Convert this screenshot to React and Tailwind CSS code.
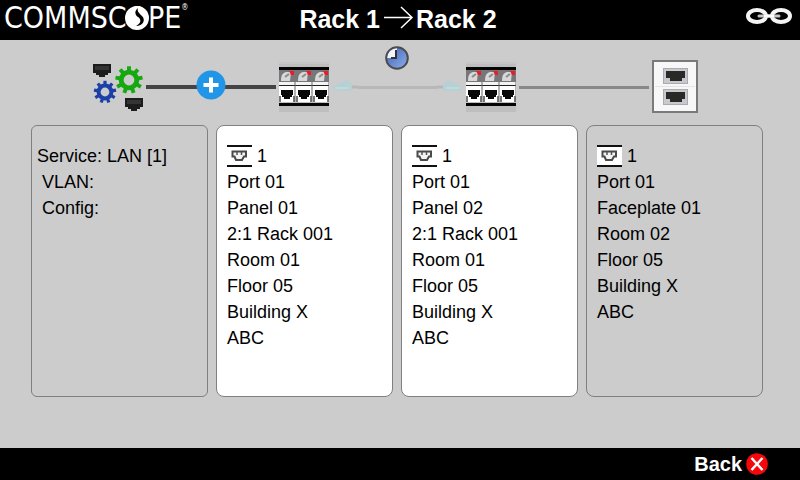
const cards = [
  {
    id: "source-port",
    active: true,
    port: "1",
    lines: ["Port 01", "Panel 01", "2:1 Rack 001", "Room 01", "Floor 05", "Building X", "ABC"],
  },
  {
    id: "target-port",
    active: true,
    port: "1",
    lines: ["Port 01", "Panel 02", "2:1 Rack 001", "Room 01", "Floor 05", "Building X", "ABC"],
  },
  {
    id: "faceplate-port",
    active: false,
    port: "1",
    lines: ["Port 01", "Faceplate 01", "Room 02", "Floor 05", "Building X", "ABC"],
  },
];

const gearTeeth = [0, 40, 80, 120, 160, 200, 240, 280, 320];

const Gear = ({ cx, cy, r, color }) => (
  <g transform={`translate(${cx} ${cy})`}>
    {gearTeeth.map((angle) => (
      <rect key={angle} x={-r * 0.2} y={-r * 1.4} width={r * 0.4} height={r * 0.6} fill={color} transform={`rotate(${angle})`} />
    ))}
    <circle r={r * 0.8} fill="none" stroke={color} strokeWidth={r * 0.5} />
  </g>
);

const Plug = ({ x, y }) => (
  <g transform={`translate(${x} ${y})`}>
    <path d="M0 0h18v9h-3v2h-3v2H6v-2H3V9H0z" fill="#1c1c1c" />
    <path d="M2 2h14v4H2z" fill="#343434" />
  </g>
);

const ServiceIcon = () => (
  <svg width="52" height="50" viewBox="0 0 52 50" className="shrink-0" role="img" aria-label="Service">
    <Plug x={2} y={2} />
    <Plug x={34} y={36} />
    <Gear cx={38} cy={18} r={9.8} color="#16a80f" />
    <Gear cx={14} cy={30} r={8} color="#1c3fa8" />
  </svg>
);

const PanelIcon = () => (
  <svg width="50" height="50" viewBox="0 0 50 50" className="shrink-0" role="img" aria-label="Patch panel">
    <rect width="50" height="50" fill="#bebebe" />
    <rect width="50" height="2" fill="#c6c6c6" />
    <rect y="5" width="50" height="3" fill="#050505" />
    <rect y="8" width="50" height="12" fill="#77777b" />
    <rect y="20" width="50" height="3" fill="#f4f4f4" />
    <rect y="23" width="50" height="1" fill="#222" />
    <rect y="24" width="50" height="16" fill="#fff" />
    <rect y="41" width="50" height="3" fill="#050505" />
    {[0, 17, 34].map((x) => (
      <g key={x} transform={`translate(${x} 0)`}>
        <path d="M2 19c0-5 1-8 5-9h5l-1 9z" fill="#d8d8d8" />
        <path d="M6 15l4-3" stroke="#8c8c8c" strokeWidth="2" />
        <path d="M10 9h5v4h-3z" fill="#ed1c24" />
        <path d="M2 28h12v5h-1v2h-2v2H5v-2H3v-2H2z" fill="#080808" />
        <path d="M0 34h2v6H0zM14 34h2v6h-2z" fill="#777" />
        <path d="M16 20v20" stroke="#666" />
      </g>
    ))}
  </svg>
);

const FaceplateIcon = () => (
  <svg width="46" height="54" viewBox="0 0 46 54" className="shrink-0" role="img" aria-label="Faceplate">
    <rect x="1" y="1" width="44" height="51" fill="#f7f7f7" stroke="#7a7a7a" strokeWidth="2" />
    <path d="M3 26.500h40" stroke="#e4e4e4" />
    {[8, 29].map((y) => (
      <g key={y} transform={`translate(11 ${y})`}>
        <rect x="0.5" y="0.5" width="24" height="15" fill="#c9c9cd" stroke="#aaaab0" />
        <path d="M3 3h19v7h-3v3H7v-3H3z" fill="#292a28" />
      </g>
    ))}
  </svg>
);

const ClockIcon = () => (
  <svg width="24" height="24" viewBox="0 0 24 24" role="img" aria-label="Scheduled">
    <defs>
      <linearGradient id="clockFace" x1="0" y1="0" x2="1" y2="1">
        <stop offset="0.2" stopColor="#4d70c0" />
        <stop offset="1" stopColor="#8fb0ea" />
      </linearGradient>
    </defs>
    <circle cx="12" cy="12" r="10.8" fill="url(#clockFace)" stroke="#4c4c50" strokeWidth="2" />
    <path d="M12 12V2.200A9.800 9.800 0 0 0 2.200 12z" fill="#f3f5fa" />
    <path d="M11 4v8H6" fill="none" stroke="#333" strokeWidth="2" />
  </svg>
);

const PortIcon = () => (
  <svg width="25" height="22" viewBox="0 0 25 22" className="shrink-0" aria-hidden="true">
    <rect width="25" height="22" fill="#fff" />
    <path d="M0 1h25M0 21h25" stroke="#111" strokeWidth="2" />
    <path d="M5.500 6.500h13.500v5h-2l-2 3.500H9L7.500 11.500h-2z" fill="#f4f4f4" stroke="#4a4a4a" strokeWidth="2" />
    <path d="M10 7v3M14.500 7v3" stroke="#555" strokeWidth="1.500" />
  </svg>
);

const LinkIcon = () => (
  <svg width="46" height="18" viewBox="0 0 46 18" fill="none" aria-hidden="true">
    <ellipse cx="11" cy="9" rx="9" ry="6" stroke="#f4f4f4" strokeWidth="4" />
    <ellipse cx="35" cy="9" rx="9" ry="6" stroke="#f4f4f4" strokeWidth="4" />
    <path d="M13 9h20" stroke="#c4c4c4" strokeWidth="3" strokeLinecap="round" />
    <path d="M18 9h10" stroke="#fff" strokeWidth="3" />
  </svg>
);

const PendingLink = () => (
  <div className="relative flex flex-1 items-center">
    <svg width="26" height="14" viewBox="0 0 26 14" className="shrink-0" aria-hidden="true">
      <path d="M0 7L15 0l6 6-2 5H3z" fill="#b6d0d3" />
      <path d="M3 8h14" stroke="#bfdadd" strokeWidth="2" />
      <path d="M20 7h6" stroke="#b8b8b8" strokeWidth="3" />
    </svg>
    <div className="h-[3px] flex-1 bg-[#b8b8b8]" />
    <svg width="26" height="14" viewBox="0 0 26 14" className="shrink-0" aria-hidden="true">
      <path d="M26 7L11 0 5 6l2 5h16z" fill="#b6d0d3" />
      <path d="M9 8h14" stroke="#bfdadd" strokeWidth="2" />
      <path d="M0 7h6" stroke="#b8b8b8" strokeWidth="3" />
    </svg>
    <div className="absolute bottom-6 left-1/2 -translate-x-1/2">
      <ClockIcon />
    </div>
  </div>
);

const Logo = () => (
  <div className="flex items-start self-start font-['DejaVu_Sans_Condensed',sans-serif] text-[30px] leading-9">
    COMMSC
    <span className="relative">
      O
      <svg viewBox="0 0 24 24" className="absolute top-1.5 left-1/2 size-6 -translate-x-1/2" aria-hidden="true">
        <circle cx="12" cy="12" r="12" fill="#fff" />
        <path d="M13 2c-4 3-3 7 0 9s4 6-2 9c7 0 10-6 6-10s-5-5-4-8z" fill="#000" />
      </svg>
    </span>
    PE
    <span className="text-[8px] leading-4">®</span>
  </div>
);

const Header = () => (
  <header className="grid h-10 grid-cols-[1fr_auto_1fr] items-center bg-black pr-2 pl-1 text-white">
    <Logo />
    <h1 className="flex items-center text-[25px] font-bold">
      Rack 1
      <svg width="36" height="24" viewBox="0 0 36 24" fill="none" className="-mt-1" role="img" aria-label="to">
        <path d="M4 11.500h28M21 1l11 10.500L21 22" stroke="#fff" strokeWidth="1.500" />
      </svg>
      Rack 2
    </h1>
    <button type="button" aria-label="Connections" className="-mt-2 justify-self-end">
      <LinkIcon />
    </button>
  </header>
);

const Topology = () => (
  <div className="flex items-center gap-[3px] pt-5 pr-[102px] pl-[91px]">
    <ServiceIcon />
    <div className="relative flex flex-1 items-center justify-center">
      <div className="h-1 w-full bg-[#444]" />
      <button type="button" aria-label="Add connection" className="absolute size-[30px]">
        <svg viewBox="0 0 30 30" className="-mt-1" aria-hidden="true">
          <circle cx="15" cy="15" r="14.500" fill="#2196e8" />
          <path d="M15 7.500v15M7.500 15h15" stroke="#fff" strokeWidth="4" />
        </svg>
      </button>
    </div>
    <PanelIcon />
    <PendingLink />
    <PanelIcon />
    <div className="h-[3px] flex-1 bg-[#888]" />
    <FaceplateIcon />
  </div>
);

const PortCard = ({ card }) => (
  <section
    className={`min-h-[272px] rounded-lg border border-[#808080] px-[10px] pt-[17px] ${card.active ? "bg-white" : "bg-[#ccc]"}`}
  >
    <p className="flex items-center gap-[5px]">
      <PortIcon />
      {card.port}
    </p>
    {card.lines.map((line) => (
      <p key={line}>{line}</p>
    ))}
  </section>
);

const App = () => {
  return (
    <div className="flex min-h-screen flex-col bg-[#ccc] font-['Liberation_Sans',Arial,sans-serif] text-black">
      <Header />
      <main className="flex-1">
        <Topology />
        <div className="mt-[11px] grid grid-cols-4 gap-2 pr-[37px] pl-[31px] text-lg leading-[26px]">
          <section className="min-h-[272px] rounded-md border border-[#808080] px-[5px] pt-[17px]">
            <p>Service: LAN [1]</p>
            <p className="pl-[5px]">VLAN:</p>
            <p className="pl-[5px]">Config:</p>
          </section>
          {cards.map((card) => (
            <PortCard key={card.id} card={card} />
          ))}
        </div>
      </main>
      <footer className="flex h-8 items-center justify-end bg-black pr-8">
        <button type="button" className="flex items-center gap-1 text-xl font-bold text-white">
          Back
          <svg width="22" height="22" viewBox="0 0 22 22" aria-hidden="true">
            <circle cx="11" cy="11" r="10.800" fill="#f5080c" />
            <path d="M5.500 5l11 12M16.500 5l-11 12" stroke="#fff" strokeWidth="2.500" />
          </svg>
        </button>
      </footer>
    </div>
  );
};

export default App;
